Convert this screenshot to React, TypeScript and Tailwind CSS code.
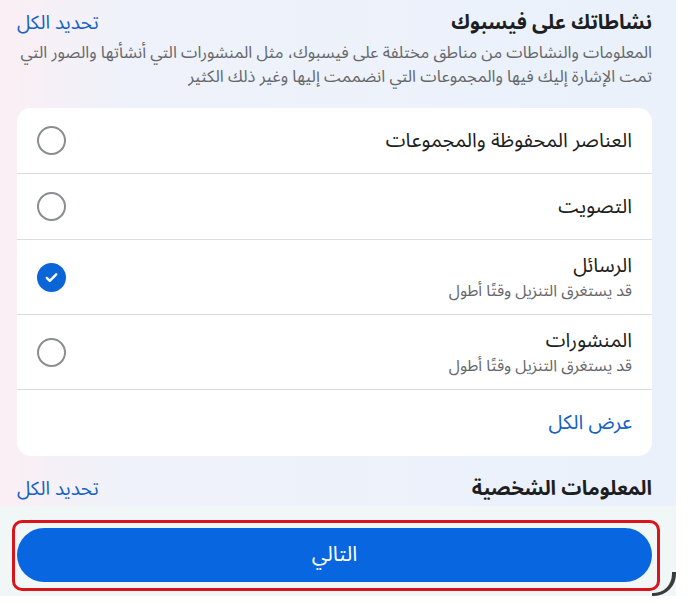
import React from "react";

type Item = {
  id: string;
  title: string;
  hint?: string;
  checked: boolean;
};

const ITEMS: Item[] = [
  { id: "saved", title: "العناصر المحفوظة والمجموعات", checked: false },
  { id: "votes", title: "التصويت", checked: false },
  { id: "messages", title: "الرسائل", hint: "قد يستغرق التنزيل وقتًا أطول", checked: true },
  { id: "posts", title: "المنشورات", hint: "قد يستغرق التنزيل وقتًا أطول", checked: false },
];

const FONT = "font-['Noto_Sans_Arabic','Noto_Sans','DejaVu_Sans',sans-serif]";

function Check({ checked }: { checked: boolean }) {
  if (checked) {
    return (
      <span className="flex h-[29px] w-[29px] shrink-0 items-center justify-center rounded-full bg-[#0a66d8]">
        <svg viewBox="0 0 24 24" className="h-[19px] w-[19px]" fill="none" stroke="white" strokeWidth="3" strokeLinecap="round" strokeLinejoin="round">
          <path d="M6 12.5l3.8 3.8L18 8" />
        </svg>
      </span>
    );
  }
  return <span className="h-[29px] w-[29px] shrink-0 rounded-full border-2 border-[#8a8d91]" />;
}

export default function App() {
  return (
    <div className={`h-[604px] w-[688px] overflow-hidden bg-white ${FONT}`}>
      <div
        dir="rtl"
        className="relative flex h-[596px] w-[676px] flex-col overflow-hidden bg-[linear-gradient(90deg,#fbeff4_0%,#eff2fa_18%,#eaf1fb_100%)]"
      >
        {/* ── Activity section ── */}
        <div className="pl-[17px] pr-[24px] pt-[8px]">
          <div className="flex items-center justify-between">
            <h2 className="text-[20px] font-bold leading-[30px] text-[#1c1e21]">نشاطاتك على فيسبوك</h2>
            <button className="text-[19px] leading-[30px] text-[#1561c4]">تحديد الكل</button>
          </div>
          <p className="mt-[3px] text-[16.5px] leading-[24px] text-[#65676b]">
            المعلومات والنشاطات من مناطق مختلفة على فيسبوك، مثل المنشورات التي أنشأتها والصور التي تمت الإشارة إليك فيها والمجموعات التي انضممت إليها وغير ذلك الكثير
          </p>

          <div className="mt-[19px] overflow-hidden rounded-[14px] bg-white">
            {ITEMS.map((item) => (
              <div
                key={item.id}
                className={`flex items-center justify-between border-b border-[#dadde1] px-[20px] ${item.hint ? "h-[75px]" : "h-[66px]"}`}
              >
                <div className="flex flex-col">
                  <span className="text-[20px] leading-[26px] text-[#1c1e21]">{item.title}</span>
                  {item.hint && <span className="mt-[1px] text-[16px] leading-[22px] text-[#65676b]">{item.hint}</span>}
                </div>
                <Check checked={item.checked} />
              </div>
            ))}
            <div className="flex h-[66px] items-center px-[20px]">
              <button className="text-[20px] text-[#1561c4]">عرض الكل</button>
            </div>
          </div>

          <div className="mt-[19px] flex items-center justify-between">
            <h2 className="text-[20px] font-bold leading-[28px] text-[#1c1e21]">المعلومات الشخصية</h2>
            <button className="text-[19px] leading-[28px] text-[#1561c4]">تحديد الكل</button>
          </div>
        </div>

        {/* ── Footer ── */}
        <div className="mt-[3px] flex-1 bg-[#f1f6f7] pl-[17px] pr-[24px] pt-[14px]">
          <div className="-ml-[5px] -mr-[8px] rounded-[10px] border-[3px] border-[#d9141b] pb-[6px] pl-[2px] pr-[5px] pt-[5px]">
            <button className="flex h-[54px] w-full items-center justify-center rounded-full bg-[#0866e0] text-[21px] text-white">
              التالي
            </button>
          </div>
        </div>

        <div className="absolute bottom-0 right-0 h-[24px] w-[24px] rounded-br-[22px] border-b-[3px] border-r-[4px] border-[#3a3b3c]" />
      </div>
    </div>
  );
}
